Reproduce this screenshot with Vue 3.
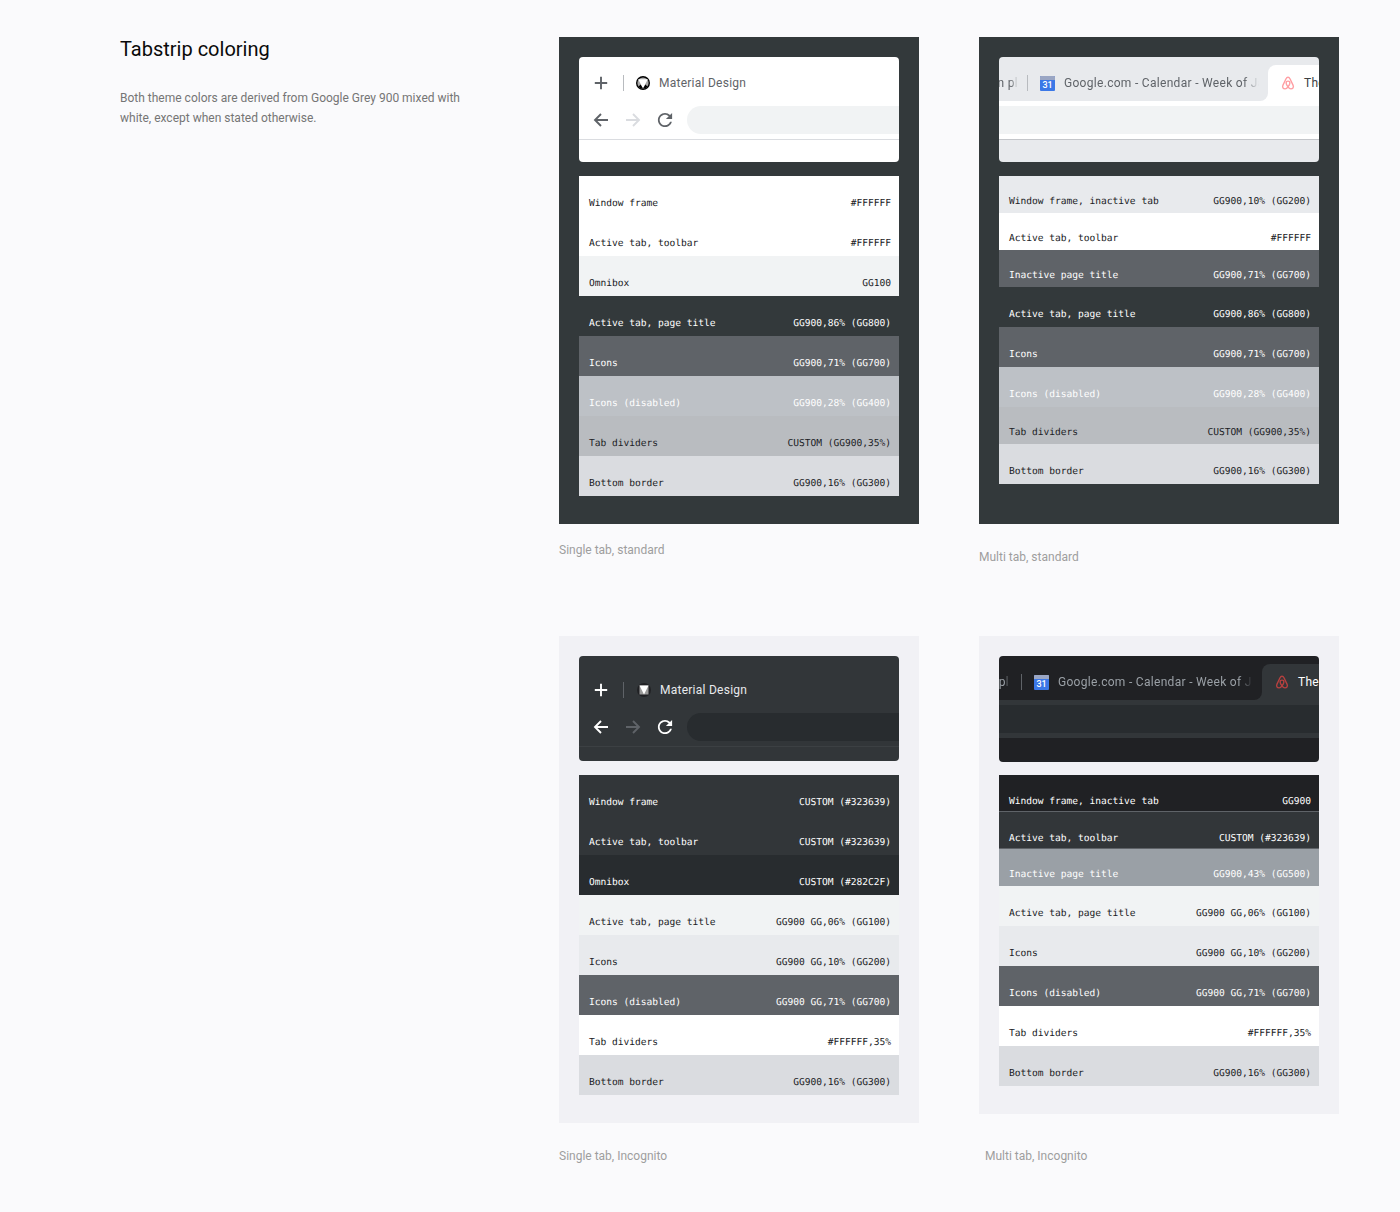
<script setup>
const G = {
  white: ['#ffffff', 'dark'], g100: ['#f1f3f4', 'dark'], g200: ['#e8eaed', 'dark'], g300: ['#dadce0', 'dark'],
  g400: ['#bdc1c6', 'light'], div: ['#b9bcc0', 'dark'], g500: ['#9aa0a6', 'light'], g700: ['#5f6368', 'light'],
  frame: ['#323639', 'light'], slate: ['#33393b', 'light'], omni: ['#282c2f', 'light'], g900: ['#202124', 'light']
}
const r = (label, value, color, size = 'full', line = false) => ({ label, value, bg: G[color][0], ink: G[color][1], size, line })

const panels = [
  {
    id: 1, caption: 'Single tab, standard', theme: 'light', multi: false, panelClass: 'panel--dark', capClass: 'cap--near',
    rows: [
      r('Window frame', '#FFFFFF', 'white'), r('Active tab, toolbar', '#FFFFFF', 'white'), r('Omnibox', 'GG100', 'g100'),
      r('Active tab, page title', 'GG900,86% (GG800)', 'slate'), r('Icons', 'GG900,71% (GG700)', 'g700'),
      r('Icons (disabled)', 'GG900,28% (GG400)', 'g400'), r('Tab dividers', 'CUSTOM (GG900,35%)', 'div'), r('Bottom border', 'GG900,16% (GG300)', 'g300')
    ]
  },
  {
    id: 2, caption: 'Multi tab, standard', theme: 'light', multi: true, panelClass: 'panel--dark panel--tall', capClass: '',
    rows: [
      r('Window frame, inactive tab', 'GG900,10% (GG200)', 'g200', 'short'), r('Active tab, toolbar', '#FFFFFF', 'white', 'short'),
      r('Inactive page title', 'GG900,71% (GG700)', 'g700', 'short'), r('Active tab, page title', 'GG900,86% (GG800)', 'slate'),
      r('Icons', 'GG900,71% (GG700)', 'g700'), r('Icons (disabled)', 'GG900,28% (GG400)', 'g400'),
      r('Tab dividers', 'CUSTOM (GG900,35%)', 'div', 'short'), r('Bottom border', 'GG900,16% (GG300)', 'g300')
    ]
  },
  {
    id: 3, caption: 'Single tab, Incognito', theme: 'dark', multi: false, panelClass: 'panel--pale', capClass: '',
    rows: [
      r('Window frame', 'CUSTOM (#323639)', 'frame'), r('Active tab, toolbar', 'CUSTOM (#323639)', 'frame'), r('Omnibox', 'CUSTOM (#282C2F)', 'omni'),
      r('Active tab, page title', 'GG900 GG,06% (GG100)', 'g100'), r('Icons', 'GG900 GG,10% (GG200)', 'g200'),
      r('Icons (disabled)', 'GG900 GG,71% (GG700)', 'g700'), r('Tab dividers', '#FFFFFF,35%', 'white'), r('Bottom border', 'GG900,16% (GG300)', 'g300')
    ]
  },
  {
    id: 4, caption: 'Multi tab, Incognito', theme: 'dark', multi: true, panelClass: 'panel--pale panel--tight', capClass: 'cap--far',
    rows: [
      r('Window frame, inactive tab', 'GG900', 'g900', 'tiny', true), r('Active tab, toolbar', 'CUSTOM (#323639)', 'frame', 'tiny', true),
      r('Inactive page title', 'GG900,43% (GG500)', 'g500', 'short'), r('Active tab, page title', 'GG900 GG,06% (GG100)', 'g100'),
      r('Icons', 'GG900 GG,10% (GG200)', 'g200'), r('Icons (disabled)', 'GG900 GG,71% (GG700)', 'g700'),
      r('Tab dividers', '#FFFFFF,35%', 'white'), r('Bottom border', 'GG900,16% (GG300)', 'g300')
    ]
  }
]
</script>

<template>
  <div class="page">
    <aside class="intro">
      <h1>Tabstrip coloring</h1>
      <p>Both theme colors are derived from Google Grey 900 mixed with white, except when stated otherwise.</p>
    </aside>

    <main class="gallery">
      <figure v-for="p in panels" :key="p.id" class="fig">
        <div class="panel" :class="p.panelClass">
          <div class="browser" :class="[`browser--${p.theme}`, p.multi ? 'browser--multi' : 'browser--single']">
            <div v-if="!p.multi" class="strip">
              <svg class="ico ico--main" viewBox="0 0 16 16"><path d="M8 1.800v12.400M1.800 8h12.400" /></svg>
              <span class="sep"></span>
              <svg v-if="p.theme === 'light'" class="fav" viewBox="0 0 14 14">
                <circle cx="7" cy="7" r="7" fill="#000" />
                <circle cx="7" cy="7" r="5.600" fill="#a8a8a8" />
                <path d="M2.200 3.200h9.600L7 12.400z" fill="#fff" />
                <path d="M2.600 10.400 4.600 8.400 7 12.600a5.600 5.600 0 0 1-4.400-2.200zM11.400 10.400 9.400 8.400 7 12.600a5.600 5.600 0 0 0 4.400-2.200z" fill="#000" />
              </svg>
              <svg v-else class="fav" viewBox="0 0 14 14">
                <circle cx="7" cy="7" r="7" fill="#202124" />
                <rect x="2.500" y="2.500" width="9" height="9" fill="#9a9a9a" />
                <path d="M2.500 2.500h9L7 11.500z" fill="#fff" />
              </svg>
              <span class="title">Material Design</span>
            </div>

            <div v-else class="tabs">
              <div class="inactive">
                <span class="clip"><span class="clip-text">Design in pl</span></span>
                <span class="sep"></span>
                <span class="cal"><span class="cal-top"></span><span class="cal-num">31</span></span>
                <span class="title title--fade">Google.com - Calendar - Week of January</span>
              </div>
              <div class="active">
                <svg class="bnb" viewBox="0 0 24 24">
                  <path d="M12 2.200c-1.800 0-2.800 1.400-3.600 3L3.400 15.600c-1.800 3.600.4 6.400 3.600 6.400 2.200 0 3.800-1.600 5-3.400 1.200 1.800 2.800 3.400 5 3.400 3.200 0 5.400-2.800 3.600-6.400L15.600 5.200c-.8-1.600-1.800-3-3.600-3z" />
                  <path d="M12 18.600c-1.800-2.400-3.200-4.800-3.200-6.800 0-1.800 1.400-3 3.200-3s3.200 1.200 3.200 3c0 2-1.400 4.400-3.200 6.800z" />
                </svg>
                <span class="title title--active">The Best Vacation</span>
              </div>
            </div>

            <div class="toolbar">
              <svg class="ico ico--main" viewBox="0 0 16 16"><path d="M15 8H2M8 2L2 8l6 6" /></svg>
              <svg class="ico ico--off" viewBox="0 0 16 16"><path d="M1 8h13M8 2l6 6-6 6" /></svg>
              <svg class="ico-fill" viewBox="3 3 18 18"><path d="M17.650 6.350C16.200 4.900 14.210 4 12 4c-4.420 0-7.990 3.580-7.990 8s3.570 8 7.990 8c3.730 0 6.840-2.550 7.730-6h-2.080c-.82 2.330-3.040 4-5.650 4-3.310 0-6-2.690-6-6s2.690-6 6-6c1.660 0 3.140.69 4.220 1.780L13 11h7V4l-2.350 2.350z" /></svg>
              <span class="omnibox"></span>
            </div>
            <div class="tail"></div>
          </div>

          <div class="table">
            <div
              v-for="row in p.rows"
              :key="row.label"
              class="row"
              :class="[`row--${row.size}`, `ink--${row.ink}`, { 'row--line': row.line }]"
              :style="{ backgroundColor: row.bg }"
            >
              <span>{{ row.label }}</span>
              <span>{{ row.value }}</span>
            </div>
          </div>
        </div>
        <figcaption class="cap" :class="p.capClass">{{ p.caption }}</figcaption>
      </figure>
    </main>
  </div>
</template>

<style>
html, body { margin: 0; background: #fafafc; }
</style>

<style scoped>
.page {
  display: flex;
  min-height: 1212px;
  padding-left: 120px;
  box-sizing: border-box;
  font-family: Roboto, "Liberation Sans", sans-serif;
  background: #fafafc;
}
.intro { flex: 0 0 439px; padding-top: 37px; box-sizing: border-box; }
h1 { margin: 0; font-size: 20px; line-height: 24px; font-weight: 400; color: #0a0a0a; }
.intro p {
  margin: 27px 0 0;
  width: 350px;
  font-size: 12px;
  line-height: 20px;
  color: #757575;
}
.gallery {
  display: grid;
  grid-template-columns: 360px 360px;
  grid-template-rows: 599px auto;
  column-gap: 60px;
  padding-top: 37px;
}
.fig { margin: 0; }
.panel { padding: 20px 20px 28px; }
.panel--dark { background: #33393b; }
.panel--pale { background: #f1f1f5; }
.panel--tall { padding-bottom: 40px; }
.cap { margin-top: 26px; font-size: 12px; line-height: 14px; color: #9e9e9e; }
.cap--near { margin-top: 19px; }
.cap--far { margin-top: 35px; padding-left: 6px; }

.browser { border-radius: 4px; overflow: hidden; margin-bottom: 14px; background: var(--frame); }
.panel--tight .browser { margin-bottom: 13px; }

.browser--light {
  --frame: #fff; --bar: #fff; --omni: #f1f3f4; --main: #5f6368; --off: #dadce0; --ink: #5f6368;
  --ink-active: #3c4043; --sep: #b8bbbf; --border: #dadce0; --bnb: #ff9ea3;
}
.browser--dark {
  --frame: #323639; --bar: #323639; --omni: #282c2f; --main: #fff; --off: #5f6368; --ink: #e8eaed;
  --ink-active: #fff; --sep: #5f6368; --border: #3c4043; --bnb: #b5403f;
}
.browser--light.browser--multi { --frame: #e8eaed; --border: #c4c6ca; }
.browser--dark.browser--multi { --frame: #202124; --border: #323639; --ink: #9aa0a6; }

.browser--light.browser--single { padding-top: 8px; }
.browser--dark.browser--single { padding-top: 16px; }
.browser--multi { padding-top: 8px; }

.strip {
  display: flex;
  align-items: center;
  height: 36px;
  padding-left: 14px;
}
.strip .sep { margin-left: 14px; }
.strip .fav { margin-left: 12px; }
.strip .title { margin-left: 9px; }
.browser--dark .strip .fav { margin-left: 13px; }

.sep { flex: none; width: 1px; height: 16px; background: var(--sep); }
.fav { flex: none; width: 14px; height: 14px; }

.title { font-size: 12px; line-height: 16px; letter-spacing: .25px; color: var(--ink); white-space: nowrap; }
.title--fade {
  flex: none;
  overflow: hidden;
  width: 195px;
  margin-left: 9px;
  letter-spacing: .3px;
  -webkit-mask-image: linear-gradient(to right, #000 180px, transparent 195px);
  mask-image: linear-gradient(to right, #000 180px, transparent 195px);
}
.title--active { margin-left: 9px; letter-spacing: .3px; color: var(--ink-active); }

.tabs {
  display: flex;
  height: 36px;
  background: linear-gradient(var(--frame) 50%, var(--bar) 50%);
}
.inactive {
  flex: 0 0 269px;
  display: flex;
  align-items: center;
  overflow: hidden;
  background: var(--frame);
  border-bottom-right-radius: 8px;
}
.active {
  flex: 1;
  min-width: 0;
  display: flex;
  align-items: center;
  overflow: hidden;
  padding-left: 13px;
  background: var(--bar);
  border-top-left-radius: 8px;
}
.clip {
  flex: 0 0 19px;
  display: flex;
  justify-content: flex-end;
  overflow: hidden;
  font-size: 12px;
  line-height: 16px;
  letter-spacing: .3px;
  color: var(--ink);
  -webkit-mask-image: linear-gradient(to right, #000 60%, transparent 100%);
  mask-image: linear-gradient(to right, #000 60%, transparent 100%);
}
.clip-text { flex: none; white-space: nowrap; }
.inactive .sep { margin-left: 9px; }
.cal {
  flex: none;
  display: flex;
  flex-direction: column;
  width: 15px;
  height: 15px;
  margin-left: 12px;
  overflow: hidden;
  border-radius: 1px;
  background: #3b78e7;
}
.cal-top { flex: 0 0 4px; background: #9aa6c4; }
.cal-num {
  font-size: 9px;
  line-height: 11px;
  font-weight: 500;
  text-align: center;
  color: #fff;
}
.bnb { flex: none; width: 14px; height: 14px; fill: none; stroke: var(--bnb); stroke-width: 2.400; }

.browser--dark.browser--multi .inactive { flex-basis: 263px; }
.browser--dark.browser--multi .clip { flex-basis: 10px; }
.browser--dark.browser--multi .inactive .sep { margin-left: 12px; }
.browser--dark.browser--multi .title--fade { width: 193px; }

.toolbar {
  display: flex;
  align-items: center;
  gap: 16px;
  height: 38px;
  padding-left: 14px;
  background: var(--bar);
  border-bottom: 1px solid var(--border);
}
.ico { flex: none; width: 16px; height: 16px; fill: none; stroke-width: 1.900; }
.ico--main { stroke: var(--main); }
.ico--off { stroke: var(--off); }
.ico-fill { flex: none; width: 16px; height: 16px; fill: var(--main); }
.omnibox {
  flex: 1;
  height: 28px;
  margin-left: -2px;
  border-radius: 14px 0 0 14px;
  background: var(--omni);
}
.browser--multi .toolbar { padding-left: 0; }
.browser--multi .toolbar > svg { display: none; }
.browser--multi .omnibox { margin-left: 0; border-radius: 0; }
.tail { height: 22px; }
.browser--dark.browser--single .tail { height: 14px; }
.browser--dark.browser--multi .toolbar { border-bottom: 0; }
.browser--dark.browser--multi .tail { height: 24px; }

.row {
  display: flex;
  justify-content: space-between;
  align-items: flex-end;
  box-sizing: border-box;
  height: 40px;
  padding: 0 8px 5px 10px;
  font-family: "DejaVu Sans Mono", "Liberation Mono", monospace;
  font-size: 9.600px;
  line-height: 14px;
  letter-spacing: -.02px;
  text-rendering: geometricPrecision;
}
.row--short { height: 37px; padding-bottom: 4px; }
.row--tiny { height: 37px; padding-bottom: 2px; }
.row--line { border-bottom: 1px solid #5f6368; }
.ink--dark { color: #202124; }
.ink--light { color: #fff; }
</style>
